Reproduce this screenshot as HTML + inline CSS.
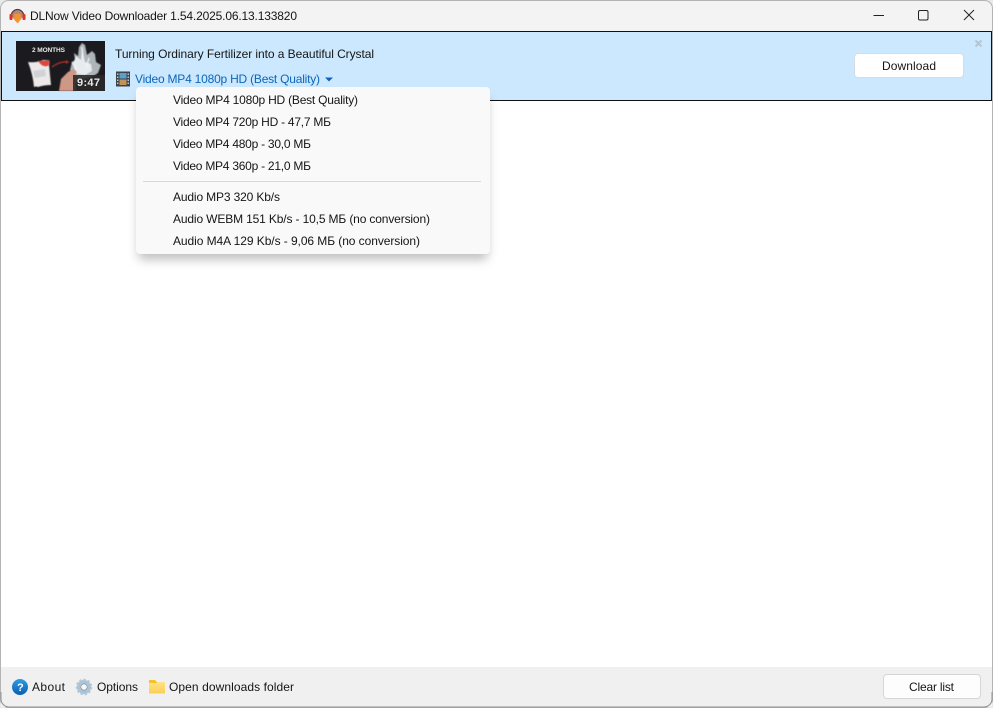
<!DOCTYPE html>
<html lang="en"><head><meta charset="utf-8"><title>DLNow Video Downloader</title>
<style>
html,body{margin:0;padding:0;width:993px;height:708px;overflow:hidden;background:#fff}
svg{display:block}
text{font-family:"Liberation Sans",sans-serif;font-size:12px;fill:#151515}
</style></head><body>
<svg width="993" height="708" viewBox="0 0 993 708" xmlns="http://www.w3.org/2000/svg">
<defs>
<filter id="sh" x="-10%" y="-15%" width="120%" height="135%"><feGaussianBlur stdDeviation="5"/></filter>
<filter id="b1" x="-10%" y="-10%" width="120%" height="120%"><feGaussianBlur stdDeviation="0.6"/></filter>
<linearGradient id="bl" x1="0" y1="0" x2="0" y2="1"><stop offset="0" stop-color="#2f9be4"/><stop offset="1" stop-color="#0a5fb0"/></linearGradient>
<linearGradient id="fo" x1="0" y1="0" x2="0" y2="1"><stop offset="0" stop-color="#ffe68f"/><stop offset="1" stop-color="#fbcf55"/></linearGradient>
</defs>
<rect width="993" height="708" fill="#e9e9e9"/>
<rect x="0.5" y="0.5" width="992" height="707" rx="8" fill="#f3f3f3" stroke="#b4b4b4"/>
<rect x="1" y="101" width="991" height="566" fill="#fff"/>
<rect x="1" y="667" width="991" height="40" fill="#f0f0f0"/>
<path d="M1 692V699a8 8 0 0 0 8 8H984a8 8 0 0 0 8-8V692" fill="none" stroke="#8f8f8f"/>

<!-- app icon -->
<g>
<path d="M11 17a6.500 7.500 0 0 1 13 0" fill="#b08a80" stroke="#5c3a34" stroke-width="1.300"/>
<path d="M14.500 14h6v3h2.500l-5.500 6.500-5.500-6.500h2.500z" fill="#f3952f"/>
<rect x="9.500" y="14" width="3" height="6" rx="1" fill="#d8352f"/>
<rect x="22.500" y="14" width="3" height="6" rx="1" fill="#d8352f"/>
</g>
<text x="30" y="20" textLength="267" lengthAdjust="spacing">DLNow Video Downloader 1.54.2025.06.13.133820</text>

<!-- window controls -->
<path d="M873.500 15.500H884" stroke="#222" stroke-width="1" fill="none"/>
<rect x="918.500" y="10.500" width="9.500" height="9.500" rx="1.500" fill="none" stroke="#222"/>
<path d="M964 10l10 10M974 10l-10 10" stroke="#222" stroke-width="1" fill="none"/>

<!-- banner -->
<rect x="1.500" y="31.500" width="990" height="69" fill="#cce8ff" stroke="#111"/>
<g>
<rect x="16" y="41" width="89" height="50" fill="#1b1b1f"/>
<g filter="url(#b1)">
<path d="M28 62q8 1 15-2l6 0q1 3 0 5l2 20q-7 0-13 2-2-1-4 0-1-12-6-25z" fill="#ece9e8"/>
<path d="M38 61l11-1q1 4-1 6-6 2-10-5z" fill="#d9473c"/>
<path d="M33 71l12-2 1 7-11 2z" fill="#cfd3d8"/>
<path d="M82 43l3 2 2 10 5-4 3 3 1 8 5 3-3 8-6 4-14 3-8-10 2-8 3-2-1-7 4 3 1-9z" fill="#aeb4b7"/>
<path d="M76 56l5 4 1-10 3 12 6 2 1 7-7 4-9-1-3-10z" fill="#e8ecee"/>
<path d="M82 47l1 11M89 58l-3 10M72 62l5 8" stroke="#f4f6f6" stroke-width="1.200" fill="none"/>
<path d="M59 91l2-12 7-7 6-3 3 3-2 4 4 2-3 6v7z" fill="#cf9886"/>
<path d="M52 67q8-6 15-5" fill="none" stroke="#b9302c" stroke-width="1.200"/>
<path d="M66 60l3 2-3 2z" fill="#b9302c"/>
</g>
<text x="32" y="52" textLength="33" lengthAdjust="spacing" style="font-size:6.500px;font-weight:700;fill:#e8e8e8">2 MONTHS</text>
<rect x="73" y="75" width="32" height="16" fill="#2a2a2a" fill-opacity=".9"/>
<text x="77" y="86" textLength="23" lengthAdjust="spacing" style="font-weight:700;font-size:11px;fill:#e8e8e8">9:47</text>
</g>
<text x="115" y="58" textLength="259" lengthAdjust="spacing">Turning Ordinary Fertilizer into a Beautiful Crystal</text>
<!-- film icon -->
<g>
<rect x="116" y="71.500" width="14" height="15" fill="#3c454d"/>
<rect x="119.500" y="73" width="7" height="5.500" fill="#5d9fc9"/>
<rect x="119.500" y="79.500" width="7" height="5.500" fill="#c29356"/>
<path d="M117.200 73.500h1.200v1.500h-1.200zM117.200 76.500h1.200v1.500h-1.200zM117.200 79.500h1.200v1.500h-1.200zM117.200 82.500h1.200v1.500h-1.200zM127.600 73.500h1.200v1.500h-1.200zM127.600 76.500h1.200v1.500h-1.200zM127.600 79.500h1.200v1.500h-1.200zM127.600 82.500h1.200v1.500h-1.200z" fill="#dfe6ea"/>
</g>
<text x="135" y="83" textLength="185" lengthAdjust="spacing" style="fill:#0a66bb">Video MP4 1080p HD (Best Quality)</text>
<path d="M325 77.500h8l-4 4z" fill="#0a66bb"/>
<path d="M975.500 40.500l6 6M981.500 40.500l-6 6" stroke="#b4c6d4" stroke-width="2" fill="none"/>
<rect x="854.500" y="53.500" width="109" height="24" rx="3.500" fill="#fff" stroke="#d5dce2"/>
<text x="882" y="70" textLength="54" lengthAdjust="spacing">Download</text>

<!-- menu -->
<rect x="138" y="96" width="350" height="164" rx="6" fill="#000" fill-opacity=".24" filter="url(#sh)"/>
<rect x="136" y="87" width="354" height="167" rx="4" fill="#f9f9f9"/>
<text x="173" y="104" textLength="185" lengthAdjust="spacing">Video MP4 1080p HD (Best Quality)</text>
<text x="173" y="126" textLength="158" lengthAdjust="spacing">Video MP4 720p HD - 47,7 МБ</text>
<text x="173" y="148" textLength="138" lengthAdjust="spacing">Video MP4 480p - 30,0 МБ</text>
<text x="173" y="170" textLength="138" lengthAdjust="spacing">Video MP4 360p - 21,0 МБ</text>
<rect x="143" y="181" width="338" height="1" fill="#d8d8d8"/>
<text x="173" y="201" textLength="107" lengthAdjust="spacing">Audio MP3 320 Kb/s</text>
<text x="173" y="223" textLength="257" lengthAdjust="spacing">Audio WEBM 151 Kb/s - 10,5 МБ (no conversion)</text>
<text x="173" y="245" textLength="247" lengthAdjust="spacing">Audio M4A 129 Kb/s - 9,06 МБ (no conversion)</text>

<!-- footer -->
<circle cx="20" cy="687" r="8" fill="url(#bl)"/>
<text x="17" y="691" style="font-weight:700;font-size:11px;fill:#fff">?</text>
<text x="32" y="691" textLength="33" lengthAdjust="spacing">About</text>
<g>
<circle cx="84" cy="687" r="5.500" fill="none" stroke="#a9c3d8" stroke-width="3"/>
<circle cx="84" cy="687" r="7.300" fill="none" stroke="#b4c8d9" stroke-width="2" stroke-dasharray="2.400 1.800"/>
<circle cx="84" cy="687" r="3.300" fill="#f4f6f8" stroke="#74899a" stroke-width=".8"/>
</g>
<text x="97" y="691" textLength="41" lengthAdjust="spacing">Options</text>
<path d="M149 681a1 1 0 0 1 1-1h5l2 2h7.500a.5.500 0 0 1 .5.500V693a.5.500 0 0 1-.5.500h-15a.5.500 0 0 1-.5-.500z" fill="url(#fo)"/>
<path d="M149 680.500a.5.500 0 0 1 .5-.500h5.500l2 2.500v.5h-8z" fill="#f5c22e"/>
<text x="169" y="691" textLength="125" lengthAdjust="spacing">Open downloads folder</text>
<rect x="883.500" y="674.500" width="97" height="24" rx="3.500" fill="#fdfdfd" stroke="#d6d6d6"/>
<text x="909" y="691" textLength="45" lengthAdjust="spacing">Clear list</text>
</svg>
</body></html>
